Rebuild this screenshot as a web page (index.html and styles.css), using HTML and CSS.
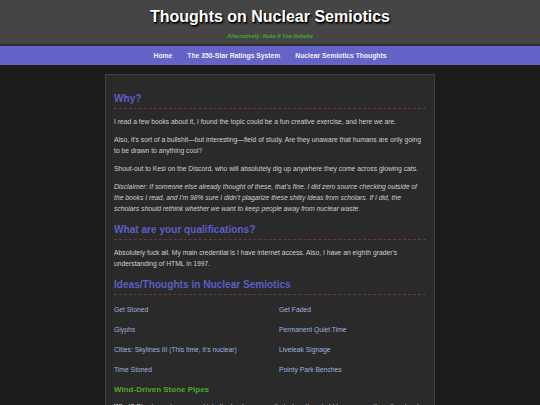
FILE: index.html
```html
<!DOCTYPE html>
<html lang="en">
<head>
<meta charset="utf-8">
<title>Thoughts on Nuclear Semiotics</title>
<link rel="stylesheet" href="styles.css">
</head>
<body>
<header class="site-header">
  <h1 class="site-title">Thoughts on Nuclear Semiotics</h1>
  <p class="site-tagline">Alternatively: Nuke If You Rebuke</p>
</header>
<nav class="site-nav">
  <a href="#">Home</a>
  <a href="#">The 350-Star Ratings System</a>
  <a href="#">Nuclear Semiotics Thoughts</a>
</nav>
<main class="content">
  <h2 class="section-title">Why?</h2>
  <p>I read a few books about it, I found the topic could be a fun creative exercise, and here we are.</p>
  <p>Also, it's sort of a bullshit—but interesting—field of study. Are they unaware that humans are only going to be drawn to anything cool?</p>
  <p>Shout-out to Kesi on the Discord, who will absolutely dig up anywhere they come across glowing cats.</p>
  <p class="disclaimer">Disclaimer: If someone else already thought of these, that's fine. I did zero source checking outside of the books I read, and I'm 98% sure I didn't plagarize these shitty ideas from scholars. If I did, the scholars should rethink whether we want to keep people away from nuclear waste.</p>
  <h2 class="section-title">What are your qualifications?</h2>
  <p>Absolutely fuck all. My main credential is I have internet access. Also, I have an eighth grader's understanding of HTML in 1997.</p>
  <h2 class="section-title">Ideas/Thoughts in Nuclear Semiotics</h2>
  <ul class="idea-list">
    <li><a href="#">Get Stoned</a></li>
    <li><a href="#">Get Faded</a></li>
    <li><a href="#">Glyphs</a></li>
    <li><a href="#">Permanent Quiet Time</a></li>
    <li><a href="#">Cities: Skylines III (This time, it's nuclear)</a></li>
    <li><a href="#">Liveleak Signage</a></li>
    <li><a href="#">Time Stoned</a></li>
    <li><a href="#">Pointy Park Benches</a></li>
  </ul>
  <h3 class="idea-title">Wind-Driven Stone Pipes</h3>
  <p><strong>What?</strong> Big stone pipes carved into the landscape, so that when the wind blows across them they howl at a pitch nobody wants to be near, day or night, for ten thousand years.</p>
</main>
</body>
</html>
```
FILE: styles.css
```css
html, body {
  margin: 0;
  padding: 0;
}
body {
  background: #1c1c1c;
  color: #cfcfcf;
  font-family: "Liberation Sans", Arial, sans-serif;
  font-size: 6.75px;
  line-height: 11px;
}
.site-header {
  background: #454545;
  height: 37px;
  padding-top: 7px;
  border-bottom: 2px solid #2e2e2e;
  text-align: center;
}
.site-title {
  margin: 0;
  font-size: 16px;
  line-height: 19px;
  font-weight: bold;
  color: #ffffff;
  text-shadow: 1px 1px 1px #000, 1px 2px 2px #111;
}
.site-tagline {
  margin: 7px 0 0;
  font-size: 5.4px;
  line-height: 7px;
  font-weight: bold;
  font-style: italic;
  color: #45a630;
}
.site-nav {
  background: #6464c8;
  height: 19px;
  display: flex;
  justify-content: center;
  align-items: center;
}
.site-nav a {
  color: #f0f0fa;
  text-decoration: none;
  font-weight: bold;
  font-size: 6.75px;
  padding: 0 7.5px;
}
.content {
  width: 312px;
  margin: 9px auto 0;
  padding: 8px 8px 20px;
  background: #2a2a2a;
  border: 1px solid #404040;
}
.content p {
  margin: 7px 0;
}
.section-title {
  margin: 10px 0 0;
  padding-bottom: 3px;
  font-size: 10.1px;
  line-height: 12px;
  font-weight: bold;
  color: #5d5dc4;
  border-bottom: 1px dashed #6e3636;
}
.content .section-title + p {
  margin-top: 7px;
}
.disclaimer {
  font-style: italic;
}
.idea-list {
  list-style: none;
  margin: 9px 0 0;
  padding: 0;
  display: grid;
  grid-template-columns: 1fr 1fr;
  column-gap: 18px;
  row-gap: 9px;
}
.idea-list a {
  color: #9ab2de;
  text-decoration: none;
}
.idea-title {
  margin: 10px 0 0;
  font-size: 8px;
  line-height: 9px;
  font-weight: bold;
  color: #4aa82c;
}
.content .idea-title + p {
  margin-top: 7px;
}
```
